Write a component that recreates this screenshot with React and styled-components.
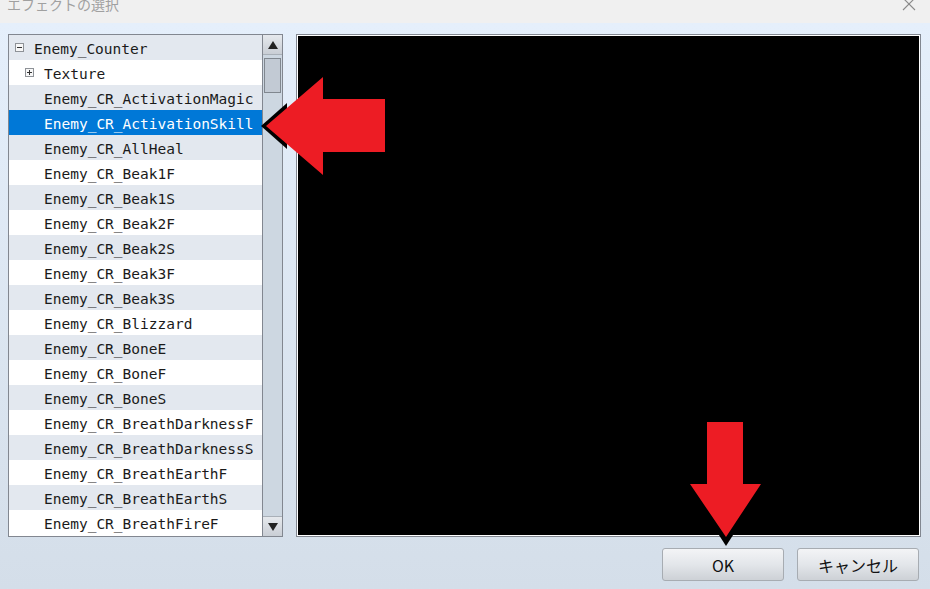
import React from "react";
import styled, { createGlobalStyle } from "styled-components";

const Global = createGlobalStyle`
  html, body { margin: 0; padding: 0; }
  body { width: 930px; height: 589px; overflow: hidden; background: #e2ecf7; }
`;

const Window = styled.div`
  position: relative;
  width: 930px;
  height: 589px;
  display: flex;
  flex-direction: column;
  overflow: hidden;
  font-family: "Noto Sans CJK JP", "Noto Sans", sans-serif;
`;

const TitleBar = styled.div`
  height: 23px;
  flex: none;
  background: #f0f0f0;
  display: flex;
  align-items: flex-start;
  justify-content: space-between;
  overflow: hidden;
  padding: 0 14px 0 7px;
`;

const TitleText = styled.div`
  font-size: 14px;
  line-height: 20px;
  margin-top: -6px;
  color: #a0a0a0;
`;

const CloseIcon = styled.svg`
  margin-top: -3px;
  display: block;
`;

const Body = styled.div`
  flex: 1;
  background: linear-gradient(#e5effb, #d4dee9);
  padding: 11px 9px 0 8px;
  display: flex;
  flex-direction: column;
`;

const MainRow = styled.div`
  display: flex;
  gap: 13px;
  height: 503px;
`;

const ListBox = styled.div`
  width: 273px;
  border: 1px solid #828790;
  background: #ffffff;
  display: flex;
  flex: none;
  overflow: hidden;
`;

const Rows = styled.div`
  flex: 1;
  display: flex;
  flex-direction: column;
  overflow: hidden;
`;

const Row = styled.div`
  height: 25px;
  box-sizing: border-box;
  padding-top: 2px;
  flex: none;
  display: flex;
  align-items: center;
  gap: 10px;
  padding-left: ${(p) => p.$indent}px;
  background: ${(p) => (p.$selected ? "#0078d7" : p.$alt ? "#e3e8ef" : "#ffffff")};
  color: ${(p) => (p.$selected ? "#ffffff" : "#1a1a1a")};
  font-family: "DejaVu Sans Mono", "Liberation Mono", monospace;
  font-size: 14.5px;
  white-space: nowrap;
`;

const ToggleBox = styled.span`
  width: 7px;
  height: 7px;
  margin-top: -2px;
  border: 1px solid #8e9297;
  background: #f7f7f7;
  position: relative;
  flex: none;
  &::before {
    content: "";
    position: absolute;
    left: 1px;
    right: 1px;
    top: 3px;
    height: 1px;
    background: #333;
  }
  &::after {
    content: "";
    display: ${(p) => (p.$plus ? "block" : "none")};
    position: absolute;
    top: 1px;
    bottom: 1px;
    left: 3px;
    width: 1px;
    background: #333;
  }
`;

const ScrollBar = styled.div`
  width: 19px;
  flex: none;
  border-left: 1px solid #828790;
  background: #cdd7e1;
  display: flex;
  flex-direction: column;
`;

const ScrollButton = styled.div`
  height: 19px;
  flex: none;
  background: linear-gradient(#e6e9ed, #c9ced5);
  border-bottom: ${(p) => (p.$down ? "none" : "1px solid #a9b0b8")};
  border-top: ${(p) => (p.$down ? "1px solid #a9b0b8" : "none")};
  display: flex;
  align-items: center;
  justify-content: center;
`;

const Thumb = styled.div`
  margin: 3px 1px 0 1px;
  height: 33px;
  border: 1px solid #80878f;
  background: #c2cad4;
`;

const Track = styled.div`
  flex: 1;
`;

const Preview = styled.div`
  flex: 1;
  border: 1px solid #828790;
  padding: 1px;
  background: #ffffff;
  display: flex;
`;

const Screen = styled.div`
  flex: 1;
  background: #000000;
`;

const ButtonRow = styled.div`
  display: flex;
  justify-content: flex-end;
  gap: 13px;
  margin-top: 11px;
  padding-right: 2px;
`;

const Button = styled.button`
  width: 122px;
  height: 33px;
  border: 1px solid #a7acb2;
  border-radius: 3px;
  background: linear-gradient(#f3f4f6, #e3e6ea 50%, #cdd1d6);
  font-family: "Noto Sans CJK JP", "Noto Sans", sans-serif;
  font-size: 16px;
  color: #111;
  padding: 0;
  line-height: 1;
`;

const Overlay = styled.svg`
  position: absolute;
  left: 0;
  top: 0;
  pointer-events: none;
`;

const items = [
  { name: "Enemy_Counter", level: 0, toggle: "minus" },
  { name: "Texture", level: 1, toggle: "plus" },
  { name: "Enemy_CR_ActivationMagic", level: 2 },
  { name: "Enemy_CR_ActivationSkill", level: 2, selected: true },
  { name: "Enemy_CR_AllHeal", level: 2 },
  { name: "Enemy_CR_Beak1F", level: 2 },
  { name: "Enemy_CR_Beak1S", level: 2 },
  { name: "Enemy_CR_Beak2F", level: 2 },
  { name: "Enemy_CR_Beak2S", level: 2 },
  { name: "Enemy_CR_Beak3F", level: 2 },
  { name: "Enemy_CR_Beak3S", level: 2 },
  { name: "Enemy_CR_Blizzard", level: 2 },
  { name: "Enemy_CR_BoneE", level: 2 },
  { name: "Enemy_CR_BoneF", level: 2 },
  { name: "Enemy_CR_BoneS", level: 2 },
  { name: "Enemy_CR_BreathDarknessF", level: 2 },
  { name: "Enemy_CR_BreathDarknessS", level: 2 },
  { name: "Enemy_CR_BreathEarthF", level: 2 },
  { name: "Enemy_CR_BreathEarthS", level: 2 },
  { name: "Enemy_CR_BreathFireF", level: 2 },
];

const indentFor = (level) => (level === 0 ? 6 : level === 1 ? 16 : 35);

export default function App() {
  return (
    <Window>
      <Global />
      <TitleBar>
        <TitleText>エフェクトの選択</TitleText>
        <CloseIcon width="14" height="14" viewBox="0 0 14 14">
          <path d="M1 1 L13 13 M13 1 L1 13" stroke="#8a8a8a" strokeWidth="1.1" fill="none" />
        </CloseIcon>
      </TitleBar>
      <Body>
        <MainRow>
          <ListBox>
            <Rows>
              {items.map((it, i) => (
                <Row
                  key={it.name}
                  $indent={indentFor(it.level)}
                  $alt={i % 2 === 0}
                  $selected={it.selected}
                >
                  {it.toggle && <ToggleBox $plus={it.toggle === "plus"} />}
                  <span>{it.name}</span>
                </Row>
              ))}
            </Rows>
            <ScrollBar>
              <ScrollButton>
                <svg width="10" height="8" viewBox="0 0 10 8">
                  <path d="M5 0 L10 8 L0 8 Z" fill="#222" />
                </svg>
              </ScrollButton>
              <Thumb />
              <Track />
              <ScrollButton $down>
                <svg width="10" height="8" viewBox="0 0 10 8">
                  <path d="M0 0 L10 0 L5 8 Z" fill="#222" />
                </svg>
              </ScrollButton>
            </ScrollBar>
          </ListBox>
          <Preview>
            <Screen />
          </Preview>
        </MainRow>
        <ButtonRow>
          <Button>OK</Button>
          <Button>キャンセル</Button>
        </ButtonRow>
      </Body>
      <Overlay width="930" height="589" viewBox="0 0 930 589">
        <polygon points="261,126 287,103 287,149" fill="#000" />
        <polygon points="266,126 323,77 323,99 385,99 385,152 323,152 323,175" fill="#ed1c24" />
        <polygon points="717,532 726,546 735,532" fill="#000" />
        <polygon points="707,422 743,422 743,484 761,484 726,537 690,484 707,484" fill="#ed1c24" />
      </Overlay>
    </Window>
  );
}
